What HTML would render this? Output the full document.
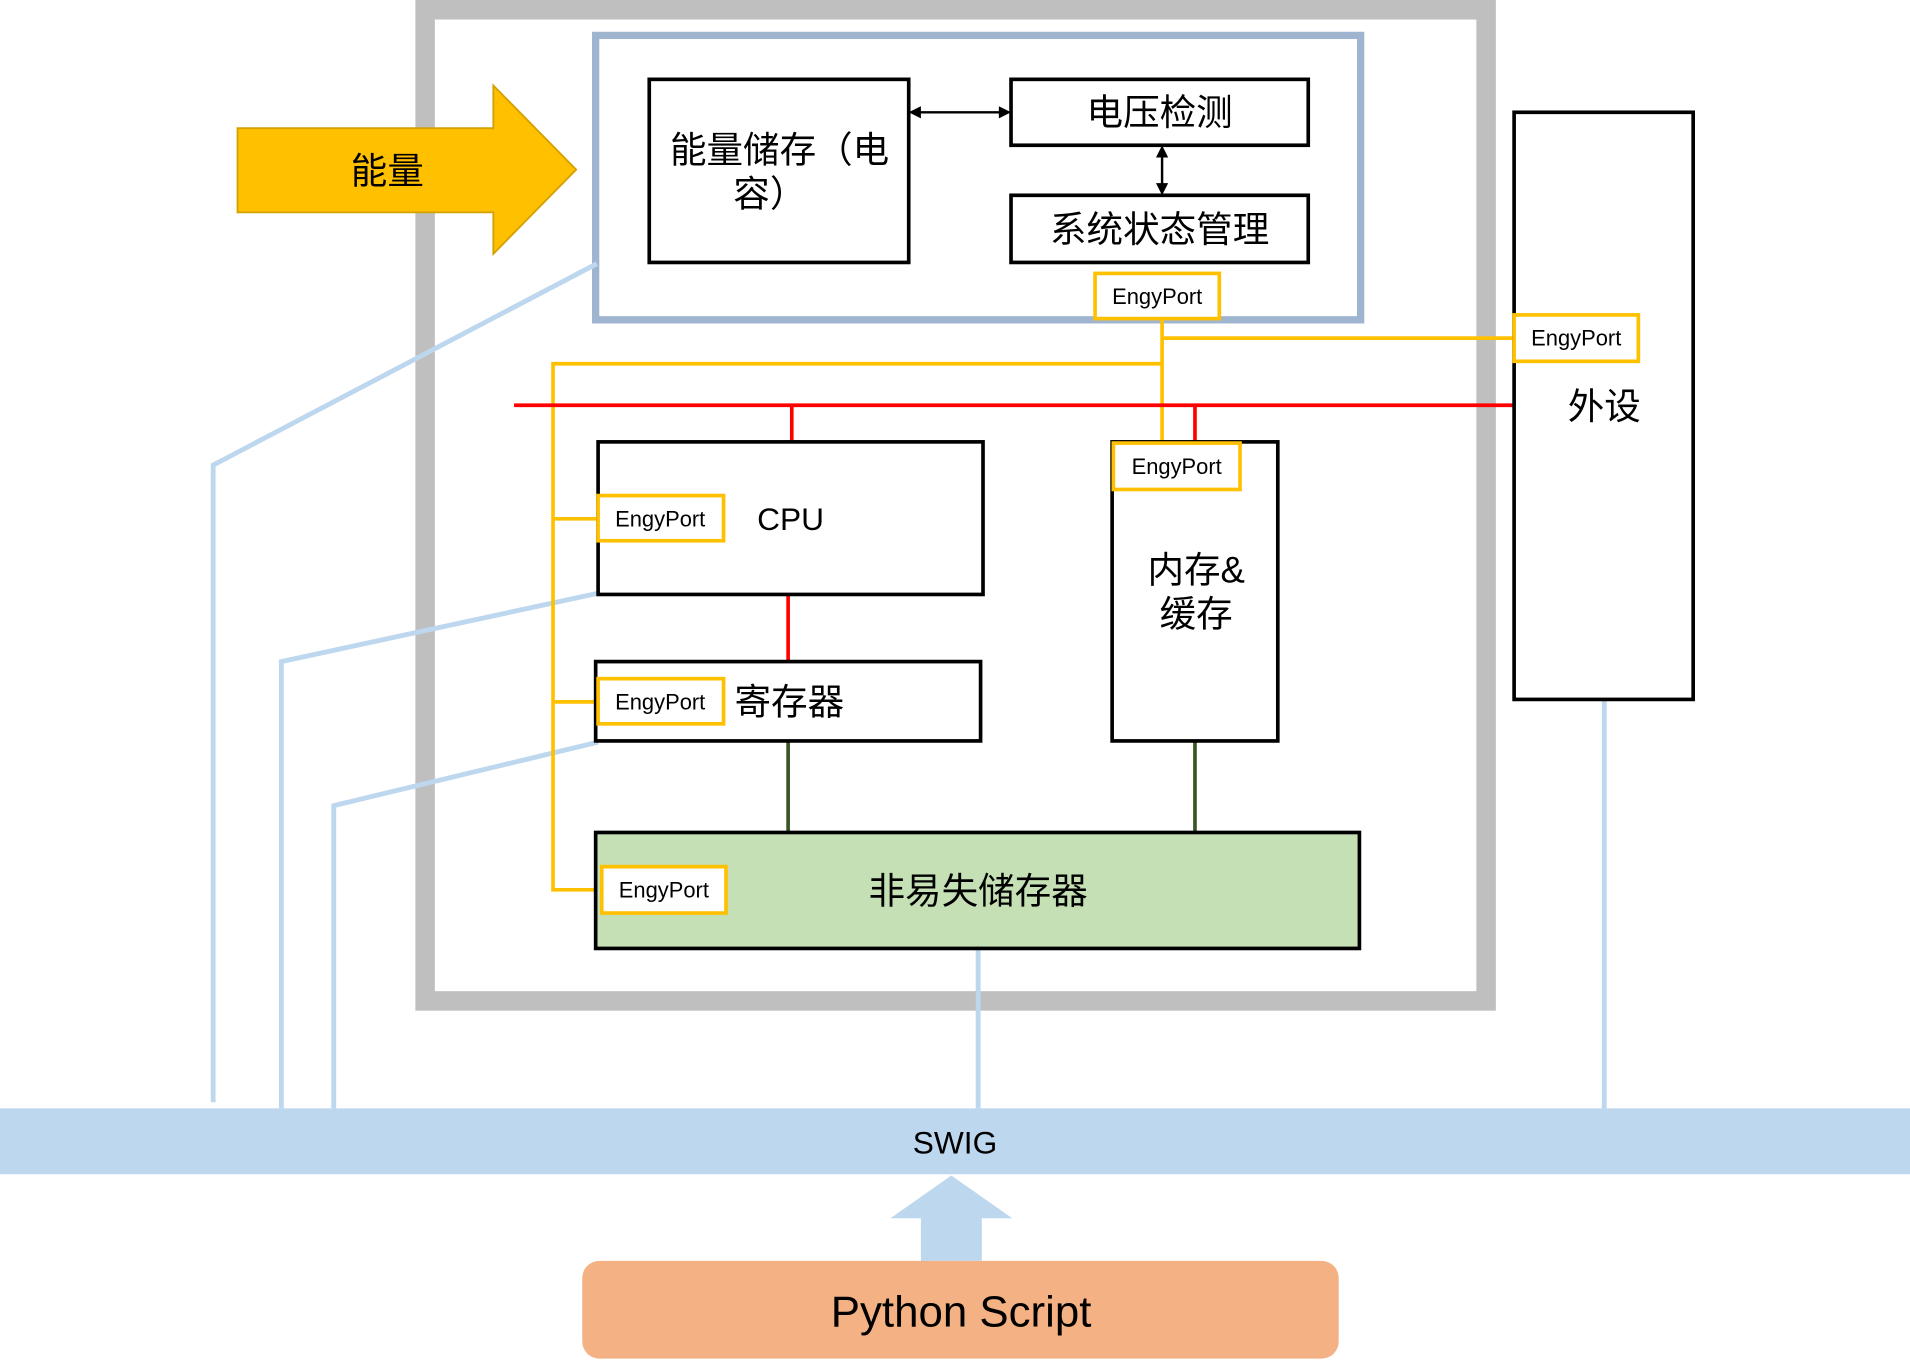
<!DOCTYPE html>
<html><head><meta charset="utf-8"><style>
html,body{margin:0;padding:0;background:#fff;}
svg{display:block;}
text{font-family:"Liberation Sans","Noto Sans CJK SC",sans-serif;fill:#000;text-anchor:middle;dominant-baseline:central;}
</style></head><body>
<svg width="1910" height="1372" viewBox="0 0 1568 1124" preserveAspectRatio="none" xmlns="http://www.w3.org/2000/svg">
<rect x="0" y="0" width="1568" height="1124" fill="#fff"/>
<!-- gray frame -->
<rect x="349" y="8" width="871" height="812" fill="#fff" stroke="#bfbfbf" stroke-width="16"/>
<!-- inner blue box -->
<rect x="489" y="29" width="628" height="233" fill="#fff" stroke="#9fb5cf" stroke-width="6"/>
<!-- light blue lines -->
<g stroke="#bdd7ee" stroke-width="4" fill="none">
<polyline points="490,216 175,381 175,903"/>
<polyline points="491,486 231,542 231,908"/>
<polyline points="491,608 274,660 274,908"/>
<line x1="803" y1="777" x2="803" y2="908"/>
<line x1="1317" y1="573" x2="1317" y2="908"/>
</g>
<!-- yellow energy arrow -->
<polygon points="195,105 405,105 405,70 473,139 405,208 405,174 195,174" fill="#ffc000" stroke="#d4a000" stroke-width="1.5"/>
<text x="318" y="140" font-size="30">能量</text>
<!-- boxes top -->
<rect x="533" y="65" width="213" height="150" fill="#fff" stroke="#000" stroke-width="3"/>
<text x="640" y="123" font-size="30">能量储存（电</text>
<text x="632" y="159" font-size="30">容）</text>
<rect x="830" y="65" width="244" height="54" fill="#fff" stroke="#000" stroke-width="3"/>
<text x="952" y="92" font-size="30">电压检测</text>
<rect x="830" y="160" width="244" height="55" fill="#fff" stroke="#000" stroke-width="3"/>
<text x="952" y="188" font-size="30">系统状态管理</text>
<!-- black arrows -->
<g stroke="#000" stroke-width="2">
<line x1="754" y1="92" x2="822" y2="92"/>
<line x1="954" y1="127" x2="954" y2="152"/>
</g>
<polygon points="746,92 756,87 756,97" fill="#000"/>
<polygon points="830,92 820,87 820,97" fill="#000"/>
<polygon points="954,119 949,129 959,129" fill="#000"/>
<polygon points="954,160 949,150 959,150" fill="#000"/>
<!-- yellow lines -->
<g stroke="#ffc000" stroke-width="3" fill="none">
<line x1="954" y1="261" x2="954" y2="363"/>
<line x1="954" y1="277" x2="1243" y2="277"/>
<polyline points="954,298 454,298 454,729 494,729"/>
<line x1="454" y1="425" x2="491" y2="425"/>
<line x1="454" y1="575" x2="491" y2="575"/>
</g>
<!-- red lines -->
<g stroke="#ff0000" stroke-width="3">
<line x1="422" y1="332" x2="1243" y2="332"/>
<line x1="650" y1="332" x2="650" y2="362"/>
<line x1="981" y1="332" x2="981" y2="362"/>
<line x1="647" y1="487" x2="647" y2="542"/>
</g>
<!-- green lines -->
<g stroke="#375623" stroke-width="3">
<line x1="647" y1="607" x2="647" y2="682"/>
<line x1="981" y1="607" x2="981" y2="682"/>
</g>
<!-- CPU -->
<rect x="491" y="362" width="316" height="125" fill="#fff" stroke="#000" stroke-width="3"/>
<text x="649" y="425" font-size="26">CPU</text>
<!-- register -->
<rect x="489" y="542" width="316" height="65" fill="#fff" stroke="#000" stroke-width="3"/>
<text x="648" y="575" font-size="30">寄存器</text>
<!-- memory -->
<rect x="913" y="362" width="136" height="245" fill="#fff" stroke="#000" stroke-width="3"/>
<text x="982" y="467" font-size="30">内存&amp;</text>
<text x="982" y="503" font-size="30">缓存</text>
<!-- NVM -->
<rect x="489" y="682" width="627" height="95" fill="#c5e0b4" stroke="#000" stroke-width="3"/>
<text x="803" y="730" font-size="30">非易失储存器</text>
<!-- peripheral -->
<rect x="1243" y="92" width="147" height="481" fill="#fff" stroke="#000" stroke-width="3"/>
<text x="1317" y="333" font-size="30">外设</text>
<!-- EngyPorts -->
<g fill="#fff" stroke="#ffc000" stroke-width="3">
<rect x="899" y="224" width="102" height="37"/>
<rect x="1243" y="258" width="102" height="38"/>
<rect x="914" y="363" width="104" height="38"/>
<rect x="491" y="406" width="103" height="37"/>
<rect x="491" y="556" width="103" height="37"/>
<rect x="494" y="710" width="102" height="38"/>
</g>
<g font-size="18">
<text x="950" y="243">EngyPort</text>
<text x="1294" y="277">EngyPort</text>
<text x="966" y="382">EngyPort</text>
<text x="542" y="425">EngyPort</text>
<text x="542" y="575">EngyPort</text>
<text x="545" y="729">EngyPort</text>
</g>
<!-- SWIG band -->
<rect x="0" y="908" width="1568" height="54" fill="#bdd7ee"/>
<text x="784" y="936" font-size="26">SWIG</text>
<!-- up arrow -->
<polygon points="781,963 831,998 806,998 806,1033 756,1033 756,998 731,998" fill="#bdd7ee"/>
<!-- Python script -->
<rect x="478" y="1033" width="621" height="80" rx="14" fill="#f4b183"/>
<text x="789" y="1075" font-size="36">Python Script</text>
</svg>
</body></html>
